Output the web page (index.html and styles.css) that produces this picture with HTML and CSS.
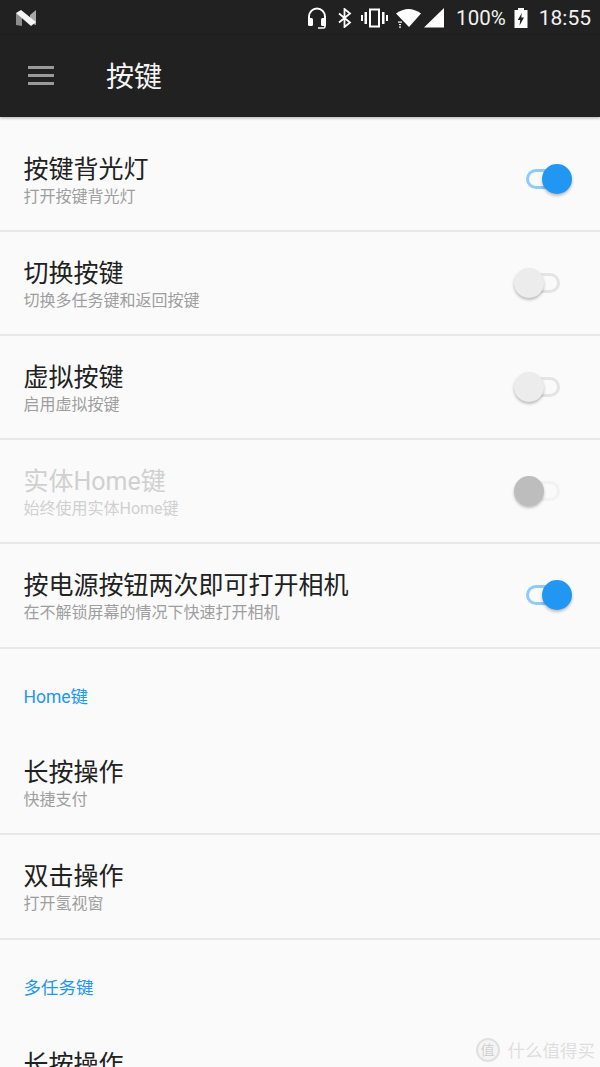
FILE: index.html
```html
<!DOCTYPE html>
<html lang="zh-CN">

<head>
    <meta charset="UTF-8">
    <meta name="viewport" content="width=device-width, initial-scale=1.0">
    <title>按键</title>
    <link rel="stylesheet" href="styles.css">
</head>

<body>
    <div class="phone">
        <div class="status-bar">
            <svg class="n-logo" width="22" height="18" viewBox="0 0 22 18">
                <path d="M1 4 L7 5.5 V17 L1 16 Z" fill="#8c8c8c" />
                <path d="M15 6 L21 1 V16 L15 14 Z" fill="#a8a8a8" />
                <path d="M1 4 L6 1 L21 13 L16 17 Z" fill="#f4f4f4" />
            </svg>
            <div class="status-right">
                <svg class="ic-head" width="20" height="22" viewBox="0 0 20 22" fill="none" stroke="#fff">
                    <path d="M2 14 V9.5 a8 8 0 0 1 16 0 V14" stroke-width="2" />
                    <rect x="1" y="11" width="5" height="8" rx="1.5" fill="#fff" stroke="none" />
                    <rect x="14" y="11" width="5" height="8" rx="1.5" fill="#fff" stroke="none" />
                    <path d="M18 18 V19.5 a1.5 1.5 0 0 1 -1.5 1.5 H11" stroke-width="1.6" />
                </svg>
                <svg class="ic-bt" width="14" height="20" viewBox="0 0 14 20" fill="none" stroke="#fff" stroke-width="1.8">
                    <path d="M1 5.5 L12 14.5 L6.5 19 V1 L12 5.5 L1 14.5" />
                </svg>
                <svg class="ic-vib" width="27" height="20" viewBox="0 0 27 20" fill="#fff">
                    <path fill-rule="evenodd" d="M8 0.5 H19 V19.5 H8 Z M10 2.5 V17.5 H17 V2.5 Z" />
                    <rect x="3.5" y="4" width="2.5" height="12" />
                    <rect x="21" y="4" width="2.5" height="12" />
                    <rect x="0" y="7" width="2" height="6" />
                    <rect x="25" y="7" width="2" height="6" />
                </svg>
                <svg class="ic-wifi" width="25" height="20" viewBox="0 0 25 20" fill="#fff">
                    <path d="M0 5.5 Q12.5 -3.5 25 5.5 L13 19 Z" />
                    <rect x="2" y="13.5" width="4" height="1.2" />
                    <rect x="3" y="16" width="2" height="1.2" />
                    <rect x="3" y="18.5" width="2" height="1.2" />
                </svg>
                <svg class="ic-signal" width="20" height="20" viewBox="0 0 20 20" fill="#fff">
                    <path d="M0 19.5 L20 0 V19.5 Z" />
                </svg>
                <span class="status-text pct">100%</span>
                <svg class="ic-batt" width="14" height="20" viewBox="0 0 14 20" fill="#fff">
                    <path fill-rule="evenodd" d="M4 0 H10 V2 H13.5 V20 H0.5 V2 H4 Z M7.8 5 L3.8 12 H6.2 L5.6 17.5 L10 9.6 H7.3 Z" />
                </svg>
                <span class="status-text time">18:55</span>
            </div>
        </div>

        <header class="toolbar">
            <div class="menu-icon"><i></i><i></i><i></i></div>
            <h1>按键</h1>
        </header>

        <main class="list">
            <div class="row">
                <div class="row-text">
                    <div class="row-title">按键背光灯</div>
                    <div class="row-sub">打开按键背光灯</div>
                </div>
                <div class="switch on"><span class="knob"></span></div>
            </div>
            <div class="row">
                <div class="row-text">
                    <div class="row-title">切换按键</div>
                    <div class="row-sub">切换多任务键和返回按键</div>
                </div>
                <div class="switch"><span class="knob"></span></div>
            </div>
            <div class="row">
                <div class="row-text">
                    <div class="row-title">虚拟按键</div>
                    <div class="row-sub">启用虚拟按键</div>
                </div>
                <div class="switch"><span class="knob"></span></div>
            </div>
            <div class="row disabled">
                <div class="row-text">
                    <div class="row-title">实体Home键</div>
                    <div class="row-sub">始终使用实体Home键</div>
                </div>
                <div class="switch"><span class="knob"></span></div>
            </div>
            <div class="row tall">
                <div class="row-text">
                    <div class="row-title">按电源按钮两次即可打开相机</div>
                    <div class="row-sub">在不解锁屏幕的情况下快速打开相机</div>
                </div>
                <div class="switch on"><span class="knob"></span></div>
            </div>

            <div class="section">Home键</div>
            <div class="row">
                <div class="row-text">
                    <div class="row-title">长按操作</div>
                    <div class="row-sub">快捷支付</div>
                </div>
            </div>
            <div class="row tall">
                <div class="row-text">
                    <div class="row-title">双击操作</div>
                    <div class="row-sub">打开氢视窗</div>
                </div>
            </div>

            <div class="section">多任务键</div>
            <div class="row last">
                <div class="row-text">
                    <div class="row-title">长按操作</div>
                </div>
            </div>
        </main>

        <div class="watermark">
            <span class="wm-badge">值</span>
            <span>什么值得买</span>
        </div>
    </div>
</body>

</html>
```

FILE: styles.css
```css
* {
    box-sizing: border-box;
}

html,
body {
    margin: 0;
    height: 100%;
}

body {
    background-color: #fafafa;
    font-family: "Roboto", "Noto Sans CJK SC", sans-serif;
    overflow: hidden;
}

.phone {
    position: relative;
    width: 600px;
    height: 1067px;
    overflow: hidden;
}

.status-bar {
    height: 35px;
    background-color: #212121;
    display: flex;
    align-items: center;
    justify-content: space-between;
    padding: 0 9px 0 15px;
}

.status-right {
    display: flex;
    align-items: center;
}

.ic-bt {
    margin-left: 11px;
}

.ic-vib {
    margin-left: 9px;
}

.ic-wifi {
    margin-left: 8px;
}

.ic-signal {
    margin-left: 3px;
}

.ic-batt {
    margin-left: 8px;
}

.status-text {
    font-size: 21px;
    color: #f2f2f2;
}

.pct {
    margin-left: 12px;
    font-size: 20.5px;
}

.time {
    margin-left: 11px;
}

.toolbar {
    height: 82px;
    background-color: #212121;
    display: flex;
    align-items: center;
    padding: 0 0 2px 28px;
    box-shadow: 0 1px 3px rgba(0, 0, 0, 0.3);
    position: relative;
}

.toolbar h1 {
    margin: 0 0 0 52px;
    font-size: 28px;
    font-weight: 400;
    color: #f5f5f5;
}

.menu-icon {
    display: flex;
    flex-direction: column;
    gap: 5px;
    width: 26px;
}

.menu-icon i {
    display: block;
    height: 3px;
    background-color: #9a9a9a;
}

.list {
    padding-top: 11px;
}

.row {
    height: 104px;
    display: flex;
    align-items: center;
    justify-content: space-between;
    padding: 0 40px 0 23.5px;
    border-bottom: 2px solid #e8e8e8;
}

.tall {
    height: 105px;
    padding-bottom: 1px;
}

.row-text {
    padding-top: 2px;
}

.row-title {
    font-size: 25px;
    line-height: 30px;
    color: #212121;
}

.row-sub {
    font-size: 16px;
    line-height: 22px;
    margin: 1px 0 -3px;
    color: #9e9e9e;
}

.disabled .row-title,
.disabled .row-sub {
    color: #d0d0d0;
}

.section {
    height: 82px;
    padding: 10px 23.5px 0;
    font-size: 17.5px;
    color: #2196f3;
    display: flex;
    align-items: center;
}

.last {
    border-bottom: none;
}

.last .row-text {
    padding-bottom: 20px;
}

.switch {
    position: relative;
    width: 34px;
    height: 20px;
    border: 3px solid #e4e4e4;
    border-radius: 10px;
}

.switch .knob {
    position: absolute;
    top: -8px;
    left: -15px;
    width: 30px;
    height: 30px;
    border-radius: 50%;
    background-color: #ececec;
    box-shadow: 0 2px 3px rgba(0, 0, 0, 0.25);
}

.switch.on {
    border-color: #8fcafa;
}

.switch.on .knob {
    left: 13px;
    background-color: #2196f3;
}

.disabled .switch {
    border-color: #f2f2f2;
}

.disabled .knob {
    background-color: #bdbdbd;
}

.watermark {
    position: absolute;
    right: 5px;
    bottom: 5px;
    display: flex;
    align-items: center;
    gap: 8px;
    font-size: 17.5px;
    color: #dedede;
    text-shadow: 0 0 1px #fff;
}

.wm-badge {
    width: 24px;
    height: 24px;
    border-radius: 50%;
    background-color: #f4f4f4;
    border: 2px solid #e0e0e0;
    color: #cfcfcf;
    font-size: 14px;
    line-height: 20px;
    text-align: center;
}
```
